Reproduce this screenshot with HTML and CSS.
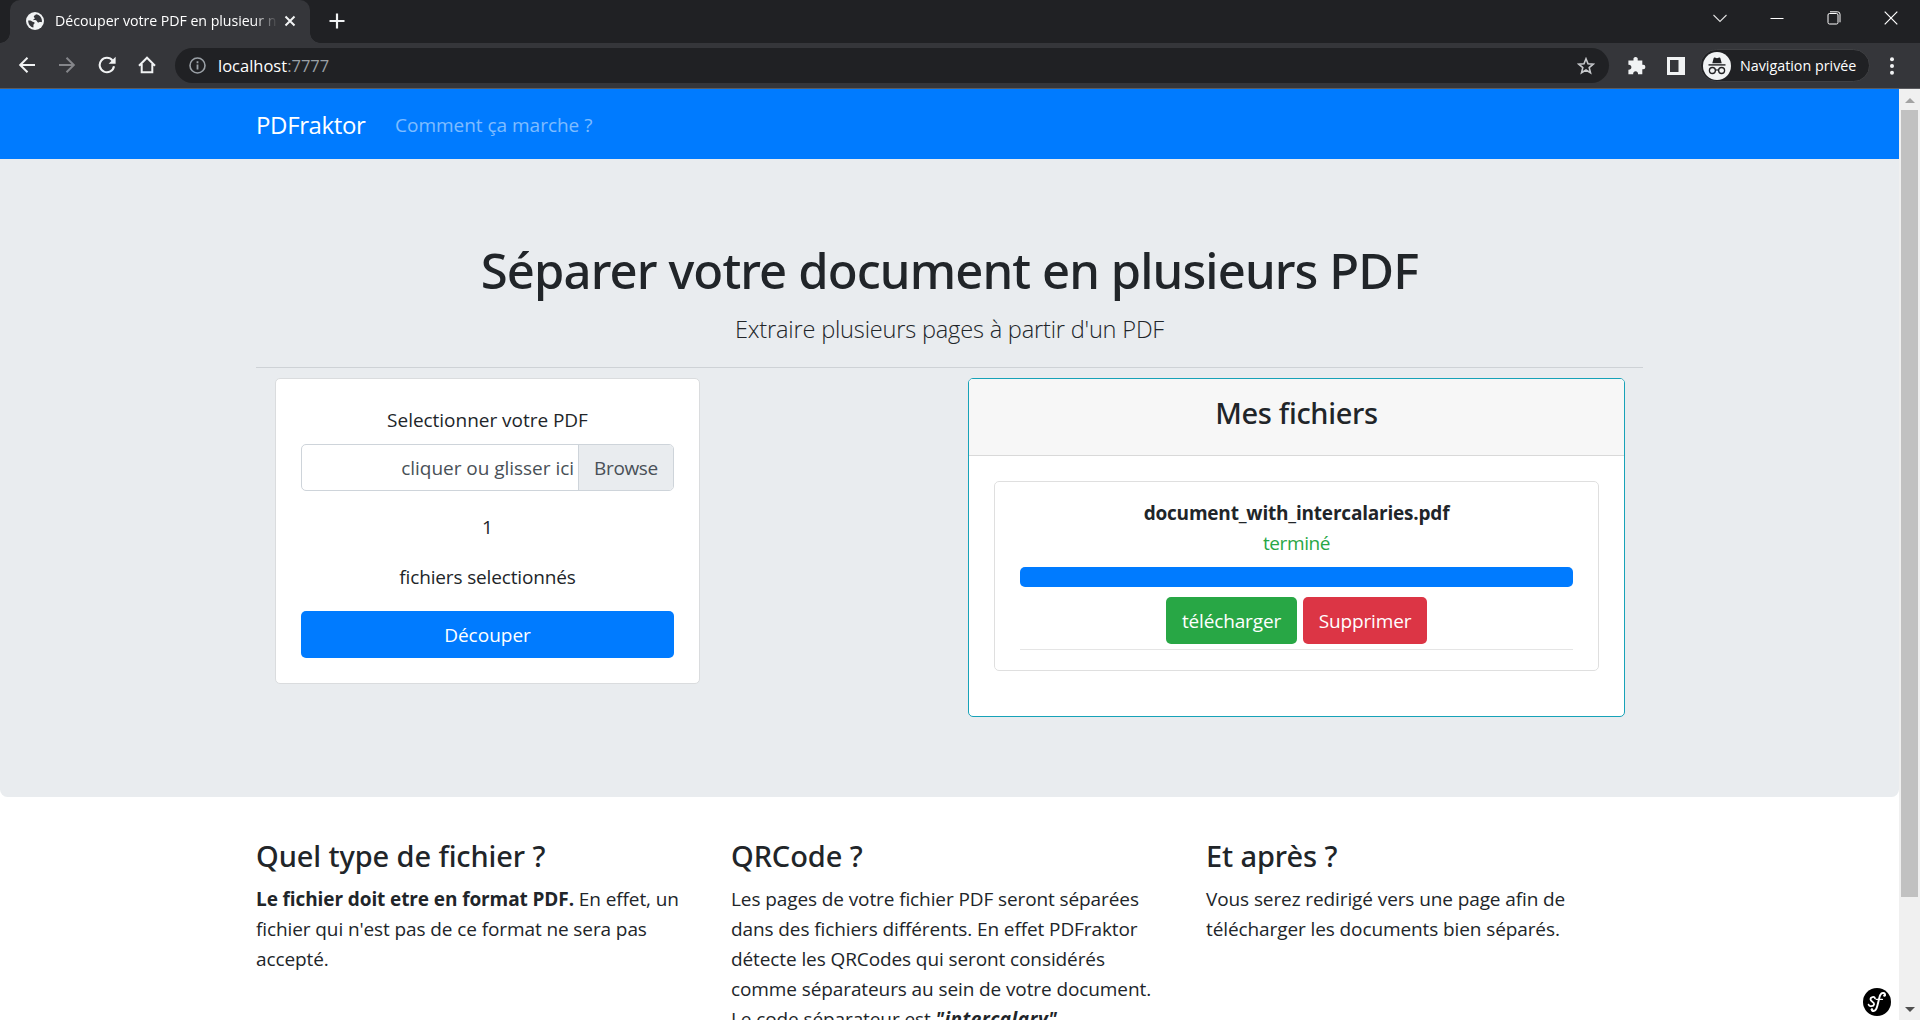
FILE: index.html
```html
<!DOCTYPE html>
<html lang="fr">
<head>
<meta charset="utf-8">
<title>Découper votre PDF en plusieurs</title>
<link rel="stylesheet" href="styles.css">
</head>
<body>
<div class="window">
  <div class="tabstrip">
    <div class="tab">
      <svg class="favicon" width="18" height="18" viewBox="0 0 18 18"><circle cx="9" cy="9" r="9" fill="#f1f3f4"/><path d="M2.2 8.6c1.6.2 2.6-.2 3.6.6 1 .8 2.6.4 2.800 1.600.2 1.200-1.400 1.200-1.200 2.600.1 1 .2 1.600-.2 2.200C4.600 15 2 12.400 2.200 8.600zM9.800 2.200c.2 1.200-1.800 1-2 2.200-.2 1 1 .8 1 1.800s-1.600.6-1.400 1.600c.2.8 2 .2 3 .8.8.6.6 1.600 1.600 1.800 1 .2 1.200-.6 2.400-.4.700.1 1.300.2 1.500.1.600-4.200-2.300-7.400-6.100-7.900z" fill="#35363a"/></svg>
      <span class="tab-title">Découper votre PDF en plusieur n</span>
      <svg class="tab-close" width="12" height="12" viewBox="0 0 12 12"><path d="M1.500 1.500l9 9M10.500 1.500l-9 9" stroke="#f1f3f4" stroke-width="2"/></svg>
    </div>
    <svg class="new-tab" width="16" height="16" viewBox="0 0 16 16"><path d="M8 .5v15M.5 8h15" stroke="#f1f3f4" stroke-width="2.200"/></svg>
    <div class="window-controls">
      <svg width="14" height="14" viewBox="0 0 14 14"><path d="M.5 4L7 10.500 13.500 4" fill="none" stroke="#e0e0e0" stroke-width="1.100"/></svg>
      <svg width="14" height="14" viewBox="0 0 14 14"><path d="M.5 7.500h13" stroke="#fff"/></svg>
      <svg width="14" height="14" viewBox="0 0 14 14"><g fill="none" stroke="#fff"><rect x="1" y="2.500" width="10" height="10.500" rx="1.500"/><path d="M3 .8h7.500a2.500 2.500 0 0 1 2.500 2.500v8"/></g></svg>
      <svg width="14" height="14" viewBox="0 0 14 14"><path d="M.7.7l12.600 12.600M13.300.7L.7 13.300" stroke="#fff" stroke-width="1.200"/></svg>
    </div>
  </div>
  <div class="toolbar">
    <div class="nav-buttons">
      <svg width="18" height="18" viewBox="0 0 18 18"><path d="M17 9H2.500M9.500 1.800L2.200 9l7.300 7.200" fill="none" stroke="#f1f3f4" stroke-width="2"/></svg>
      <svg width="18" height="18" viewBox="0 0 18 18"><path d="M1 9h14.500M8.500 1.800L15.800 9l-7.300 7.200" fill="none" stroke="#85868a" stroke-width="2"/></svg>
      <svg width="18" height="18" viewBox="0 0 18 18"><path d="M16 10.200A7.200 7.200 0 1 1 14.600 4.600" fill="none" stroke="#f1f3f4" stroke-width="2.100"/><path d="M17.600.8v7h-7z" fill="#f1f3f4"/></svg>
      <svg width="18" height="18" viewBox="0 0 18 18"><path d="M3.700 8v8.300h10.600V8M1 9.700l8-8 8 8" fill="none" stroke="#f1f3f4" stroke-width="2"/></svg>
    </div>
    <div class="omnibox">
      <svg width="17" height="17" viewBox="0 0 17 17"><circle cx="8.500" cy="8.500" r="7.500" fill="none" stroke="#9aa0a6" stroke-width="1.600"/><path d="M8.500 7.600v5M8.500 4.300v2" stroke="#9aa0a6" stroke-width="1.800"/></svg>
      <span class="url">localhost<span class="port">:7777</span></span>
      <svg class="star" width="18" height="18" viewBox="0 0 18 18"><path d="M9 1.800l2 5 5.300.4-4.100 3.400 1.300 5.200L9 13l-4.500 2.800 1.300-5.200-4.100-3.400L7 6.800z" fill="none" stroke="#c6c8cb" stroke-width="1.600"/></svg>
    </div>
    <svg class="puzzle" width="18" height="18" viewBox="0 0 18 18"><path d="M7.600 0a2.100 2.100 0 0 1 2.100 2.600V3.500h4.600v4.300h.9a2.200 2.200 0 0 1 0 4.400h-.9v5.100H10c.2-1.800-.8-3-2.400-3s-2.600 1.200-2.400 3H.4v-4.500c1.900.1 3-.9 3-2.500s-1.100-2.600-3-2.400V3.500h5.100v-.9A2.100 2.100 0 0 1 7.600 0z" fill="#f1f3f4"/></svg>
    <svg class="panel" width="18" height="18" viewBox="0 0 18 18"><path fill-rule="evenodd" d="M0 0h18v18H0zM3 3v12h8.500V3z" fill="#f1f3f4"/></svg>
    <div class="incognito">
      <svg width="28" height="28" viewBox="0 0 28 28"><circle cx="14" cy="14" r="14" fill="#f1f3f4"/><path d="M9.300 11.200l1.300-5q.3-.9 1.200-.6l2.200.6 2.200-.6q.9-.3 1.200.6l1.300 5z" fill="#202124"/><path d="M5.500 12.900h17" stroke="#202124" stroke-width="1.400"/><g fill="none" stroke="#202124" stroke-width="1.300"><circle cx="9.400" cy="18.500" r="3"/><circle cx="18.600" cy="18.500" r="3"/><path d="M12.400 18.300q1.600-1 3.200 0"/></g></svg>
      <span>Navigation privée</span>
    </div>
    <svg class="more" width="4" height="18" viewBox="0 0 4 18"><g fill="#f1f3f4"><circle cx="2" cy="2.200" r="2"/><circle cx="2" cy="9" r="2"/><circle cx="2" cy="15.800" r="2"/></g></svg>
  </div>
  <div class="viewport">
    <div class="page">
      <nav class="navbar"><a class="brand">PDFraktor</a><a class="nav-link">Comment ça marche ?</a></nav>
      <section class="jumbotron">
        <h1>Séparer votre document en plusieurs PDF</h1>
        <p class="lead">Extraire plusieurs pages à partir d'un PDF</p>
        <hr>
        <div class="cards">
          <form class="card upload">
            <label>Selectionner votre PDF</label>
            <div class="file-input"><span class="placeholder">cliquer ou glisser ici</span><span class="browse">Browse</span></div>
            <p>1</p>
            <p>fichiers selectionnés</p>
            <button type="button" class="btn primary">Découper</button>
          </form>
          <div class="card files">
            <div class="card-header"><h4>Mes fichiers</h4></div>
            <div class="card-body">
              <div class="file">
                <strong>document_with_intercalaries.pdf</strong>
                <span class="done">terminé</span>
                <div class="progress"></div>
                <div class="actions"><button type="button" class="btn success">télécharger</button><button type="button" class="btn danger">Supprimer</button></div>
                <div class="rule"></div>
              </div>
            </div>
          </div>
        </div>
      </section>
      <section class="columns">
        <div><h4>Quel type de fichier ?</h4><p><strong>Le fichier doit etre en format PDF.</strong> En effet, un<br>fichier qui n'est pas de ce format ne sera pas<br>accepté.</p></div>
        <div><h4>QRCode ?</h4><p>Les pages de votre fichier PDF seront séparées<br>dans des fichiers différents. En effet PDFraktor<br>détecte les QRCodes qui seront considérés<br>comme séparateurs au sein de votre document.<br>Le code séparateur est <strong class="code"><em>"intercalary"</em></strong></p></div>
        <div><h4>Et après ?</h4><p>Vous serez redirigé vers une page afin de<br>télécharger les documents bien séparés.</p></div>
      </section>
      <svg class="symfony" width="28" height="28" viewBox="0 0 28 28"><circle cx="14" cy="14" r="14" fill="#000"/><g fill="none" stroke="#fff" stroke-linecap="round"><path d="M12 10.300c-.6-2.200-4.600-1.500-4.500 1.100.1 2.200 4.100 2.500 3.600 4.900-.5 2.500-4.800 2.500-5.500.4" stroke-width="1.800"/><path d="M22 7.200c.2-2.600-3.200-3-4.700-.3-1.500 2.900-2.200 10-3.900 13.700-1.200 2.800-4.400 3.200-4.700 1.100" stroke-width="2"/><path d="M13.200 11.400h6.200" stroke-width="1.300"/></g><circle cx="21.400" cy="7.600" r="1.200" fill="#fff"/><circle cx="9" cy="21.400" r="1.200" fill="#fff"/></svg>
    </div>
    <div class="scrollbar"><i class="up"></i><div class="thumb"></div><i class="down"></i></div>
  </div>
</div>
</body>
</html>
```
FILE: styles.css
```css
*{box-sizing:border-box}
body{margin:0;overflow:hidden;font:400 19px/30px "Open Sans","Noto Sans",sans-serif;letter-spacing:-.1px;color:#212529;background:#fff}
h1,h4,p,hr{margin:0}
svg{flex:none;display:block}
.window{height:1020px;display:flex;flex-direction:column;overflow:hidden}

/* browser chrome */
.tabstrip{height:43px;background:#202124;display:flex;align-items:flex-start;letter-spacing:0}
.tab{position:relative;width:300px;height:43px;margin-left:10px;background:#35363a;border-radius:10px 10px 0 0;display:flex;align-items:center;padding:0 14.500px 1px 16px}
.tab::before,.tab::after{content:"";position:absolute;bottom:0;width:10px;height:10px}
.tab::before{left:-10px;background:radial-gradient(circle at 0 0,#202124 9.500px,#35363a 10px)}
.tab::after{right:-10px;background:radial-gradient(circle at 100% 0,#202124 9.500px,#35363a 10px)}
.tab-title{margin-left:11px;width:222px;font-size:14.200px;line-height:20px;letter-spacing:-.05px;color:#fff;white-space:nowrap;overflow:hidden;-webkit-mask-image:linear-gradient(90deg,#000 198px,transparent 223px);mask-image:linear-gradient(90deg,#000 198px,transparent 223px)}
.tab-close{margin-left:auto}
.new-tab{margin:13px 0 0 19px}
.window-controls{display:flex;gap:43px;margin:11px 22px 0 auto}
.toolbar{height:46px;background:#35363a;border-bottom:1px solid #5b5c60;display:flex;align-items:center;letter-spacing:0}
.nav-buttons{display:flex;gap:22px;margin:-1px 19px 0 18px}
.omnibox{width:1434px;height:35px;border-radius:18px;background:#202124;display:flex;align-items:center;padding:0 14px}
.url{margin-left:12px;font-size:16.500px;line-height:24px;color:#fff}
.port{color:#9aa0a6}
.star{margin-left:auto}
.puzzle{margin-left:19px}
.panel{margin-left:21px}
.incognito{height:33px;width:170px;margin-left:15px;border-radius:17px;background:#202124;border:1px solid #3f4043;display:flex;align-items:center;gap:9px;padding-left:2px;font-size:14.300px;color:#fff;white-space:nowrap}
.more{margin-left:20px}

.viewport{flex:1;min-height:0;display:flex}
.page{position:relative;width:1899px;overflow:hidden}
.scrollbar{width:21px;background:#f0f0f0;display:flex;flex-direction:column;align-items:center}
.scrollbar i{border:5px solid transparent}
.up{border-top:0!important;border-bottom-color:#a3a3a3!important;margin-top:9px}
.down{border-bottom:0!important;border-top-color:#505050!important;margin:auto 0 8px}
.thumb{width:17px;height:787px;margin-top:7px;background:#c1c1c1}

/* page */
.navbar{height:70px;padding:2px 256px 0;background:#007bff;display:flex;align-items:center}
.brand{font-size:24px;letter-spacing:-.36px;color:#fff}
.nav-link{margin-left:29.500px;letter-spacing:-.02px;color:rgba(255,255,255,.5)}
.jumbotron{height:638px;background:#e9ecef;border-radius:0 0 7.500px 7.500px;padding:81px 256px 0;text-align:center}
h1{font:500 49px/60px "Noto Sans",sans-serif;letter-spacing:-.9px;margin-bottom:11px}
.lead{font-size:23.600px;font-weight:300;line-height:37px;letter-spacing:-.2px}
hr{border:0;height:1px;background:#ced2d6;margin:19px 0 10px}
.cards{display:flex;justify-content:space-between;align-items:flex-start;padding:0 18px 0 19px}
.card{background:#fff;border:1px solid #dadcde;border-radius:5px}
.upload{width:425px;height:306px;padding:26px 25px 24px;display:flex;flex-direction:column;letter-spacing:-.03px}
.file-input{height:47px;margin:9px 0 21px;border:1px solid #ced4da;border-radius:5px;display:flex;overflow:hidden;line-height:46px;color:#495057}
.placeholder{flex:1;text-align:right;padding-right:4px}
.browse{width:95px;background:#e9ecef;border-left:1px solid #ced4da;letter-spacing:-.35px}
.upload p{height:30px;margin-bottom:20px}
.upload p:nth-of-type(2){margin-bottom:19px;letter-spacing:-.15px}
.btn{height:47px;border:0;border-radius:5px;color:#fff;font:inherit;letter-spacing:-.15px;padding:0}
.primary{background:#007bff;letter-spacing:0}
.files{width:657px;height:339px;border-color:#17a2b8;overflow:hidden}
.card-header{height:77px;background:#f7f7f7;border-bottom:1px solid #d9d9d9;padding:16px}
h4{font:500 29px/36px "Noto Sans",sans-serif;letter-spacing:-.1px;height:36px}
.card-header h4{letter-spacing:-.3px}
.card-body{padding:25px}
.file{height:190px;border:1px solid #dfdfdf;border-radius:5px;padding:16px 25px 14px;display:flex;flex-direction:column}
.file strong{letter-spacing:-.2px}
.done{color:#28a745;letter-spacing:-.4px}
.progress{height:20px;margin:9px 0 10px;background:#007bff;border-radius:5px}
.actions{display:flex;justify-content:center;gap:6px}
.success{width:131px;background:#28a745}
.danger{width:124px;background:#dc3545}
.rule{height:1px;margin-top:5px;background:#e5e5e5}
.columns{display:grid;grid-template-columns:437.500px 437.500px 437.500px;column-gap:37.500px;padding:41px 0 0 256px;white-space:nowrap}
.columns h4{margin-bottom:10px}
.code{letter-spacing:.45px}
.symfony{position:absolute;right:8px;bottom:4px}
```
